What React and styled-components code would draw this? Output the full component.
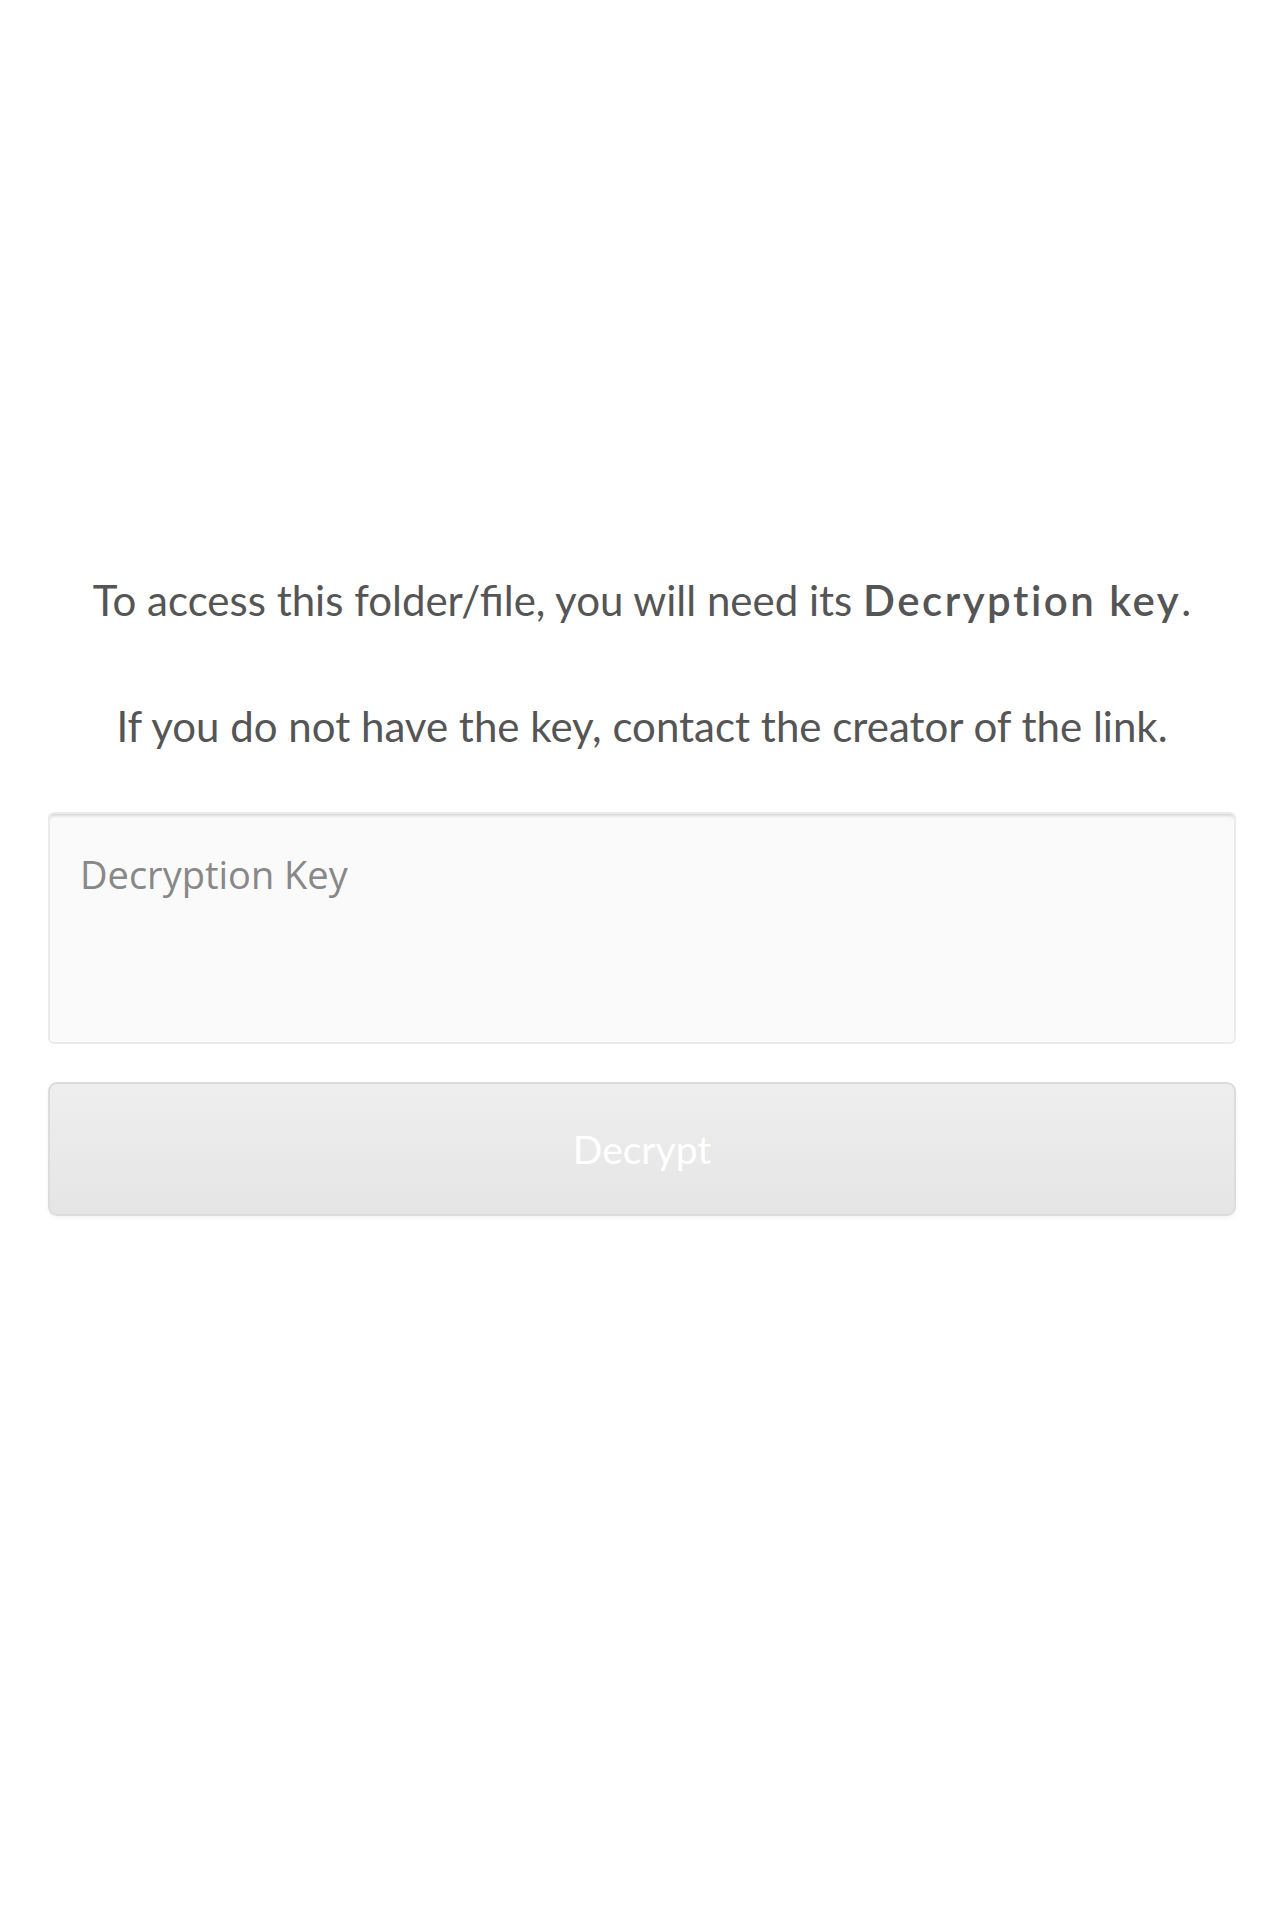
import React from 'react';
import styled, { createGlobalStyle } from 'styled-components';

const GlobalStyle = createGlobalStyle`
  html, body {
    margin: 0;
    padding: 0;
    background: #fff;
  }
  body {
    font-family: Lato, "Open Sans", sans-serif;
  }
`;

const Page = styled.div`
  min-height: 1932px;
  box-sizing: border-box;
  padding: 575px 48px 0;
  display: flex;
  flex-direction: column;
  align-items: stretch;
`;

const Message = styled.p`
  margin: 0;
  color: #555;
  font-size: 42px;
  line-height: 50px;
  text-align: center;
  margin-bottom: ${(p) => p.gap || 0}px;
`;

const Strong = styled.strong`
  font-weight: 600;
  letter-spacing: 2.5px;
`;

const KeyInput = styled.textarea`
  display: block;
  box-sizing: border-box;
  width: 100%;
  height: 232px;
  margin: 0;
  padding: 38px 30px;
  border: 2px solid #ebebeb;
  border-radius: 6px;
  background: #fafafa;
  box-shadow: inset 0 4px 3px -2px rgba(0, 0, 0, 0.14);
  font-family: "Open Sans", sans-serif;
  font-size: 38px;
  line-height: 44px;
  color: #555;
  resize: none;
  outline: none;

  &::placeholder {
    color: #888;
  }
`;

const DecryptButton = styled.button`
  display: block;
  box-sizing: border-box;
  width: 100%;
  height: 134px;
  margin-top: 38px;
  border: 2px solid #dcdcdc;
  border-radius: 9px;
  background: linear-gradient(#eeeeee, #e5e5e5);
  box-shadow: 0 2px 4px rgba(0, 0, 0, 0.05);
  font-family: Lato, sans-serif;
  font-size: 39px;
  color: #fff;
  cursor: default;
`;

export default function App() {
  return (
    <>
      <GlobalStyle />
      <Page>
        <Message gap={76}>
          To access this folder/file, you will need its <Strong>Decryption key</Strong>.
        </Message>
        <Message gap={61}>
          If you do not have the key, contact the creator of the link.
        </Message>
        <KeyInput placeholder="Decryption Key" />
        <DecryptButton disabled>Decrypt</DecryptButton>
      </Page>
    </>
  );
}
